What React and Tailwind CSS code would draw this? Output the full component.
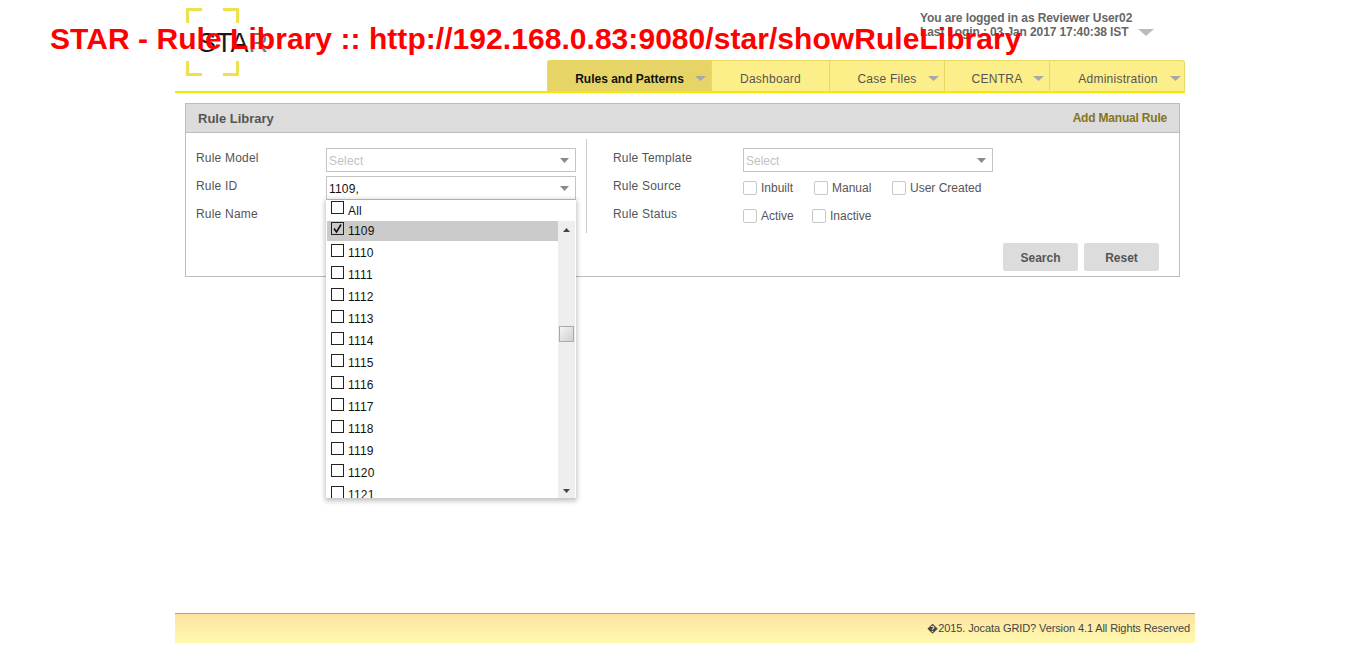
const tabs = [
  { label: "Rules and Patterns", width: "w-[164px]", active: true, arrow: true },
  { label: "Dashboard", width: "w-[118px]", arrow: false },
  { label: "Case Files", width: "w-[115px]", arrow: true },
  { label: "CENTRA", width: "w-[105px]", arrow: true },
  { label: "Administration", width: "w-[136px]", arrow: true },
];

const ruleIds = ["1110", "1111", "1112", "1113", "1114", "1115", "1116", "1117", "1118", "1119", "1120", "1121"];

const Arrow = ({ className }) => (
  <svg width="12" height="6" viewBox="0 0 12 6" preserveAspectRatio="none" className={className}>
    <path d="M0 0h12L6 6z" fill="currentColor" />
  </svg>
);

const Logo = () => (
  <svg width="90" height="68" viewBox="0 0 90 68" className="shrink-0">
    <g fill="none" stroke="#ede24e" strokeWidth="3">
      <path d="M16 1.5H1.5V15" />
      <path d="M37 1.5H51.5V15" />
      <path d="M1.5 53V66.5H16" />
      <path d="M51.5 53V66.5H37" />
    </g>
    <text x="12" y="44" fontSize="27" fontFamily="Liberation Sans, sans-serif" fill="#1a1a1a">
      STA<tspan fill="#777">R</tspan>
    </text>
  </svg>
);

const Select = ({ value, placeholder }) => (
  <div className="h-[24px] w-[250px] border border-[#c4c4c4] bg-white flex items-center justify-between pl-[2px] pr-[6px]">
    <span className={"pt-[2px] " + (value ? "text-[#111]" : "text-[#c2c2c2]")}>{value || placeholder}</span>
    <Arrow className="w-[9px] h-[5px] text-[#8a8a8a]" />
  </div>
);

const Check = ({ label, className }) => (
  <label className={"flex items-center gap-[4px] text-[#555] " + (className || "")}>
    <span className="w-[14px] h-[14px] border border-[#c8c8c8] rounded-[2px] bg-white" />
    {label}
  </label>
);

const ListRow = ({ label, checked, active, className, labelClass }) => (
  <div className={"flex items-start pl-[4px] " + (active ? "bg-[#cbcbcb] " : "") + className}>
    <span className="mt-[1px] w-[13px] h-[13px] border border-[#222] bg-transparent flex items-center justify-center shrink-0">
      {checked && (
        <svg width="11" height="11" viewBox="0 0 11 11">
          <path d="M2 5.5L4.5 9L9 1.5" fill="none" stroke="#111" strokeWidth="1.6" />
        </svg>
      )}
    </span>
    <span className={"ml-[4px] text-[#111] leading-[14px] " + (labelClass || "mt-[3px]")}>{label}</span>
  </div>
);

const RuleIdDropdown = () => (
  <div className="absolute left-0 top-[24px] w-[250px] h-[299px] bg-white z-10 shadow-[0_1px_5px_1px_rgba(0,0,0,0.25)] border-b border-[#ccc] overflow-hidden pl-[1px]">
    <ListRow label="All" className="h-[21px] w-[248px]" labelClass="mt-[4px]" />
    <div className="flex h-[278px]">
      <div className="w-[231px] overflow-hidden">
        <ListRow label="1109" checked active className="h-[20px] mb-[2px]" />
        {ruleIds.map((id) => (
          <ListRow key={id} label={id} className="h-[22px]" />
        ))}
      </div>
      <div className="w-[17px] bg-[#eeeeee] flex flex-col items-center pt-[7px]">
        <Arrow className="w-[7px] h-[4px] rotate-180 text-[#444] shrink-0" />
        <div className="mt-[94px] w-[15px] h-[16px] border border-[#aaa] bg-gradient-to-br from-[#f4f4f4] to-[#cfcfcf] shrink-0" />
        <Arrow className="mt-[147px] w-[7px] h-[4px] text-[#444] shrink-0" />
      </div>
    </div>
  </div>
);

export default function App() {
  return (
    <div className="relative min-h-[658px] bg-white font-['Liberation_Sans',Arial,sans-serif] text-[12px] text-[#555] pl-[175px]">
      <h1 className="absolute left-[50px] top-[21px] z-20 text-[#ff0000] font-bold text-[30px] leading-[36px] whitespace-nowrap tracking-[0.05px]">
        STAR - Rule Library :: http://192.168.0.83:9080/star/showRuleLibrary
      </h1>

      <header className="w-[1010px] h-[93px] border-b-2 border-[#f5e900] flex justify-between">
        <div className="pl-[11px] pt-[8px]">
          <Logo />
        </div>
        <div className="w-[638px] flex flex-col justify-between">
          <div className="pl-[373px] pt-[11px] text-[#666] leading-[14px] font-bold tracking-[-0.1px] whitespace-nowrap">
            <div>You are logged in as Reviewer User02</div>
            <div className="flex items-center">
              Last Login : 03 Jan 2017 17:40:38 IST
              <Arrow className="ml-[10px] w-[16px] h-[7px] text-[#bcbcbc]" />
            </div>
          </div>
          <nav className="flex h-[31px] bg-[#fcee88] border border-b-0 border-[#e6d964] rounded-t-[3px]">
            {tabs.map((t) => (
              <div
                key={t.label}
                className={"relative shrink-0 flex items-center justify-center border-r border-[#e6d964] last:border-r-0 " + t.width + (t.active ? " bg-[#e6d566] text-[#111] font-bold" : " text-[#555] tracking-[0.25px]")}
              >
                <span className="pt-[5px]">{t.label}</span>
                {t.arrow && <Arrow className="absolute right-[5px] top-[15px] w-[11px] h-[5px] text-[#a8a8a8]" />}
              </div>
            ))}
          </nav>
        </div>
      </header>

      <main className="ml-[10px] mt-[10px] w-[995px] h-[174px] border border-[#bdbdbd]">
        <div className="h-[29px] bg-[#dcdcdc] flex items-center justify-between pl-[12px] pr-[12px] border-b border-[#bdbdbd]">
          <span className="text-[13px] font-bold text-[#555] pt-[1px]">Rule Library</span>
          <span className="font-bold text-[#85751a] tracking-[-0.2px]">Add Manual Rule</span>
        </div>
        <div className="flex pt-[6px]">
          <div className="w-[401px] h-[94px] border-r border-[#ccc] pl-[10px] pt-[9px] tracking-[0.2px]">
            <div className="flex h-[27px]">
              <span className="w-[130px] pt-[1px]">Rule Model</span>
              <Select placeholder="Select" />
            </div>
            <div className="flex h-[28px] mt-[1px]">
              <span className="w-[130px] pt-[1px]">Rule ID</span>
              <div className="relative">
                <Select value="1109," />
                <RuleIdDropdown />
              </div>
            </div>
            <div className="flex h-[28px]">
              <span className="w-[130px] pt-[1px]">Rule Name</span>
            </div>
          </div>
          <div className="flex-1 flex flex-col">
            <div className="pl-[26px] pt-[9px]">
              <div className="flex h-[27px]">
                <span className="w-[130px] pt-[1px] tracking-[0.2px]">Rule Template</span>
                <Select placeholder="Select" />
              </div>
              <div className="flex h-[28px] mt-[1px]">
                <span className="w-[130px] pt-[1px] tracking-[0.2px]">Rule Source</span>
                <div className="flex h-[16px] mt-[4px]">
                  <Check label="Inbuilt" className="w-[71px]" />
                  <Check label="Manual" className="w-[78px]" />
                  <Check label="User Created" />
                </div>
              </div>
              <div className="flex h-[28px]">
                <span className="w-[130px] pt-[1px] tracking-[0.2px]">Rule Status</span>
                <div className="flex h-[16px] mt-[4px]">
                  <Check label="Active" className="w-[69px]" />
                  <Check label="Inactive" />
                </div>
              </div>
            </div>
            <div className="flex justify-end gap-[6px] pr-[20px] mt-[11px]">
              <button className="w-[75px] h-[28px] pt-[2px] bg-[#dcdcdc] rounded-[2px] font-bold text-[#555]">Search</button>
              <button className="w-[75px] h-[28px] pt-[2px] bg-[#dcdcdc] rounded-[2px] font-bold text-[#555]">Reset</button>
            </div>
          </div>
        </div>
      </main>

      <footer className="mt-[336px] w-[1020px] h-[30px] border-t border-[#b9a46c] bg-gradient-to-b from-[#fde3a3] to-[#fff9ae] flex items-center justify-end pr-[5px] text-[11px] text-[#444] tracking-[-0.1px]">
        �2015. Jocata GRID? Version 4.1 All Rights Reserved
      </footer>
    </div>
  );
}
